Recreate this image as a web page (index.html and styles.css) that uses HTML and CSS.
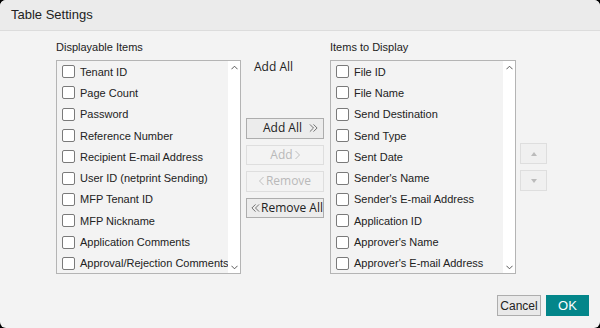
FILE: index.html
```html
<!DOCTYPE html>
<html>
<head>
    <link rel="stylesheet" href="styles.css">
</head>
<body>
<div class="dialog">
    <div class="dialog-header">Table Settings</div>

    <div class="dialog-body">
        <div class="list-column">
            <div class="list-label">Displayable Items</div>
            <div class="list-box">
                <div class="list-items">
                    <label class="list-row"><span class="check"></span>Tenant ID</label>
                    <label class="list-row"><span class="check"></span>Page Count</label>
                    <label class="list-row"><span class="check"></span>Password</label>
                    <label class="list-row"><span class="check"></span>Reference Number</label>
                    <label class="list-row"><span class="check"></span>Recipient E-mail Address</label>
                    <label class="list-row"><span class="check"></span>User ID (netprint Sending)</label>
                    <label class="list-row"><span class="check"></span>MFP Tenant ID</label>
                    <label class="list-row"><span class="check"></span>MFP Nickname</label>
                    <label class="list-row"><span class="check"></span>Application Comments</label>
                    <label class="list-row"><span class="check"></span>Approval/Rejection Comments</label>
                </div>
                <div class="scroll-track">
                    <svg class="scroll-arrow" viewBox="0 0 8 5"><path d="M0.5 4.5L4 1L7.5 4.5" /></svg>
                    <svg class="scroll-arrow" viewBox="0 0 8 5"><path d="M0.5 0.5L4 4L7.5 0.5" /></svg>
                </div>
            </div>
        </div>

        <div class="move-column">
            <div class="move-hint">Add All</div>
            <div class="move-buttons">
                <button class="move-btn move-btn-first">Add All
                    <svg class="chev chev-double" viewBox="0 0 10 10"><path d="M1 1l4 4-4 4M5 1l4 4-4 4" /></svg>
                </button>
                <button class="move-btn" disabled>Add
                    <svg class="chev" viewBox="0 0 5 10"><path d="M0.5 1l4 4-4 4" /></svg>
                </button>
                <button class="move-btn" disabled>
                    <svg class="chev" viewBox="0 0 5 10"><path d="M4.5 1l-4 4 4 4" /></svg>Remove
                </button>
                <button class="move-btn move-btn-last">
                    <svg class="chev chev-double" viewBox="0 0 10 10"><path d="M5 1L1 5l4 4M9 1L5 5l4 4" /></svg>Remove All
                </button>
            </div>
        </div>

        <div class="list-column list-column-right">
            <div class="list-label">Items to Display</div>
            <div class="list-box">
                <div class="list-items">
                    <label class="list-row"><span class="check"></span>File ID</label>
                    <label class="list-row"><span class="check"></span>File Name</label>
                    <label class="list-row"><span class="check"></span>Send Destination</label>
                    <label class="list-row"><span class="check"></span>Send Type</label>
                    <label class="list-row"><span class="check"></span>Sent Date</label>
                    <label class="list-row"><span class="check"></span>Sender's Name</label>
                    <label class="list-row"><span class="check"></span>Sender's E-mail Address</label>
                    <label class="list-row"><span class="check"></span>Application ID</label>
                    <label class="list-row"><span class="check"></span>Approver's Name</label>
                    <label class="list-row"><span class="check"></span>Approver's E-mail Address</label>
                </div>
                <div class="scroll-track">
                    <svg class="scroll-arrow" viewBox="0 0 8 5"><path d="M0.5 4.5L4 1L7.5 4.5" /></svg>
                    <svg class="scroll-arrow" viewBox="0 0 8 5"><path d="M0.5 0.5L4 4L7.5 0.5" /></svg>
                </div>
            </div>
        </div>

        <div class="order-column">
            <button class="order-btn" disabled><span class="tri-up"></span></button>
            <button class="order-btn" disabled><span class="tri-down"></span></button>
        </div>
    </div>

    <div class="dialog-footer">
        <button class="btn-cancel">Cancel</button>
        <button class="btn-ok">OK</button>
    </div>
</div>
</body>
</html>
```

FILE: styles.css
```css
* {
    margin: 0;
    padding: 0;
    box-sizing: border-box;
}

body {
    background: #000;
    width: 600px;
    height: 328px;
    overflow: hidden;
    font-family: "Liberation Sans", Arial, sans-serif;
    color: #222;
}

.dialog {
    width: 600px;
    height: 328px;
    background: #f3f3f3;
    border-radius: 6px;
    overflow: hidden;
    display: flex;
    flex-direction: column;
}

.dialog-header {
    height: 31px;
    flex-shrink: 0;
    background: #ebebeb;
    border-bottom: 1px solid #dcdcdc;
    padding-left: 11px;
    font-size: 13px;
    line-height: 30px;
    color: #222;
}

.dialog-body {
    display: flex;
    padding: 10px 0 0 56px;
}

.list-column {
    display: flex;
    flex-direction: column;
}

.list-label {
    font-size: 11px;
    line-height: 13px;
    height: 13px;
    margin-bottom: 6px;
    color: #222;
}

.list-box {
    width: 185px;
    height: 214px;
    border: 1px solid #b4b4b4;
    background: #f3f3f3;
    display: flex;
    overflow: hidden;
}

.list-column-right .list-box {
    width: 186px;
}

.list-items {
    flex: 1;
    overflow: hidden;
}

.list-row {
    display: flex;
    align-items: center;
    gap: 5px;
    height: 21.3px;
    padding-left: 5px;
    font-size: 11px;
    white-space: nowrap;
    color: #222;
}

.check {
    width: 13px;
    height: 13px;
    flex-shrink: 0;
    border: 1px solid #7a7a7a;
    border-radius: 2px;
    background: #fff;
}

.scroll-track {
    width: 12px;
    flex-shrink: 0;
    background: #fff;
    display: flex;
    flex-direction: column;
    justify-content: space-between;
    align-items: center;
    padding: 4px 0 3px;
}

.scroll-arrow {
    width: 7px;
    height: 5px;
    fill: none;
    stroke: #444;
    stroke-width: 1;
}

.move-column {
    width: 78px;
    margin: 0 6px 0 5px;
    display: flex;
    flex-direction: column;
}

.move-hint {
    margin-top: 19px;
    padding-left: 8px;
    font-size: 12px;
    line-height: 13px;
    font-family: "Open Sans", "Liberation Sans", sans-serif;
    color: #222;
}

.move-buttons {
    margin-top: 45px;
    display: flex;
    flex-direction: column;
    gap: 6px;
}

.move-btn {
    height: 20.5px;
    border: 1px solid #adadad;
    background: #ececec;
    font-family: "Open Sans", "Liberation Sans", sans-serif;
    font-size: 12px;
    color: #222;
    display: flex;
    align-items: center;
    justify-content: center;
    gap: 2px;
    line-height: 1;
}

.move-btn-first {
    justify-content: flex-end;
    padding-right: 5px;
    gap: 7px;
}

.move-btn-last {
    justify-content: flex-start;
    padding-left: 4px;
    gap: 1px;
}

.move-btn:disabled {
    border-color: #dedede;
    background: #f3f3f3;
    color: #b9b9b9;
}

.chev {
    width: 5px;
    height: 10px;
    fill: none;
    stroke: currentColor;
    stroke-width: 0.9;
}

.chev-double {
    width: 9px;
    height: 10px;
    color: #555;
}

.order-column {
    margin: 102px 0 0 4px;
    display: flex;
    flex-direction: column;
    gap: 6px;
}

.order-btn {
    width: 27px;
    height: 21px;
    border: 1px solid #dedede;
    background: #f0f0f0;
    display: flex;
    align-items: center;
    justify-content: center;
}

.tri-up,
.tri-down {
    width: 0;
    height: 0;
    border-left: 3px solid transparent;
    border-right: 3px solid transparent;
}

.tri-up {
    border-bottom: 4px solid #bbb;
}

.tri-down {
    border-top: 4px solid #bbb;
}

.dialog-footer {
    display: flex;
    justify-content: flex-end;
    gap: 5px;
    padding: 21px 11px 0 0;
}

.btn-cancel {
    width: 44px;
    height: 21px;
    border: 1px solid #adadad;
    background: #e9e9e9;
    font-family: "Liberation Sans", Arial, sans-serif;
    font-size: 12px;
    color: #222;
}

.btn-ok {
    width: 43px;
    height: 21px;
    border: none;
    background: #03868a;
    font-family: "Liberation Sans", Arial, sans-serif;
    font-size: 13px;
    color: #fff;
}
```
